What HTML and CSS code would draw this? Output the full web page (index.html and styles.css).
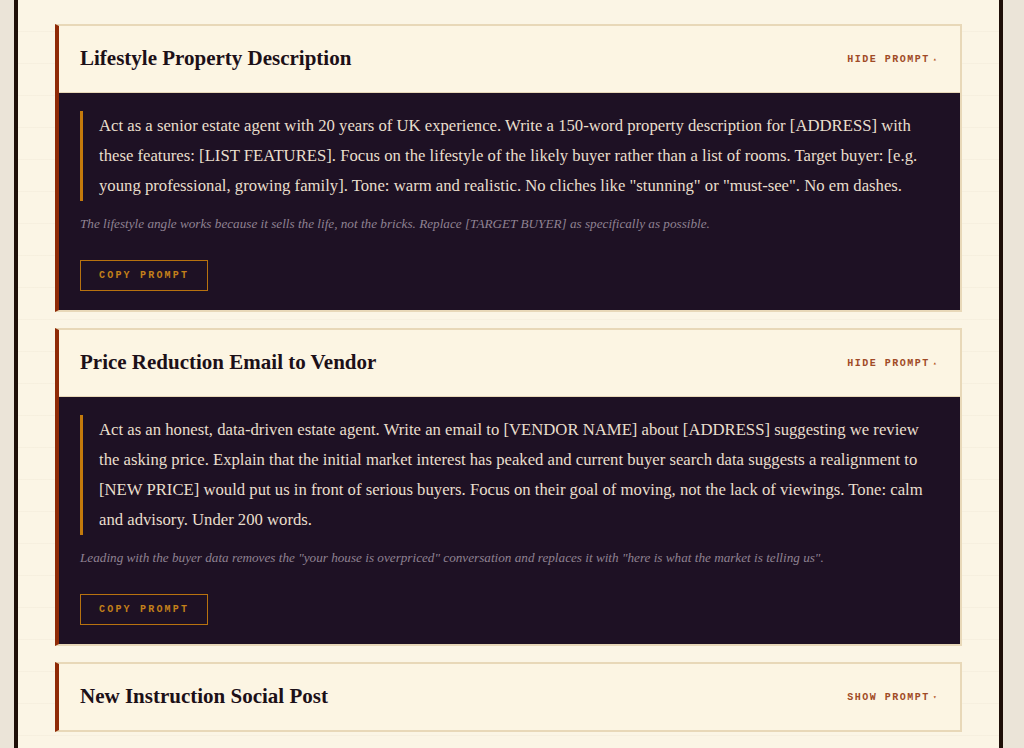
FILE: index.html
```html
<!DOCTYPE html>
<html lang="en">
<head>
    <meta charset="UTF-8">
    <meta name="viewport" content="width=device-width, initial-scale=1.0">
    <title>Estate Agent Prompt Library</title>
    <link rel="stylesheet" href="styles.css">
</head>
<body>
    <main class="sheet">
        <section class="prompt-card open">
            <header class="prompt-head">
                <h3>Lifestyle Property Description</h3>
                <button class="toggle" onclick="toggleCard(this)">Hide prompt<span class="arrow">&#9652;</span></button>
            </header>
            <div class="prompt-body">
                <blockquote class="prompt-text">Act as a senior estate agent with 20 years of UK experience. Write a 150-word property description for [ADDRESS] with these features: [LIST FEATURES]. Focus on the lifestyle of the likely buyer rather than a list of rooms. Target buyer: [e.g. young professional, growing family]. Tone: warm and realistic. No cliches like "stunning" or "must-see". No em dashes.</blockquote>
                <p class="prompt-note">The lifestyle angle works because it sells the life, not the bricks. Replace [TARGET BUYER] as specifically as possible.</p>
                <button class="copy-btn" onclick="copyPrompt(this)">Copy prompt</button>
            </div>
        </section>

        <section class="prompt-card open">
            <header class="prompt-head">
                <h3>Price Reduction Email to Vendor</h3>
                <button class="toggle" onclick="toggleCard(this)">Hide prompt<span class="arrow">&#9652;</span></button>
            </header>
            <div class="prompt-body">
                <blockquote class="prompt-text">Act as an honest, data-driven estate agent. Write an email to [VENDOR NAME] about [ADDRESS] suggesting we review the asking price. Explain that the initial market interest has peaked and current buyer search data suggests a realignment to [NEW PRICE] would put us in front of serious buyers. Focus on their goal of moving, not the lack of viewings. Tone: calm and advisory. Under 200 words.</blockquote>
                <p class="prompt-note">Leading with the buyer data removes the "your house is overpriced" conversation and replaces it with "here is what the market is telling us".</p>
                <button class="copy-btn" onclick="copyPrompt(this)">Copy prompt</button>
            </div>
        </section>

        <section class="prompt-card">
            <header class="prompt-head">
                <h3>New Instruction Social Post</h3>
                <button class="toggle" onclick="toggleCard(this)">Show prompt<span class="arrow">&#9662;</span></button>
            </header>
            <div class="prompt-body">
                <blockquote class="prompt-text">Write a short social media post announcing a new instruction at [ADDRESS]. Lead with one standout feature, mention [AREA], and end with a clear call to book a viewing. Under 80 words. No hashtags.</blockquote>
                <p class="prompt-note">Keep it to one photo-worthy detail. Posts that try to say everything get scrolled past.</p>
                <button class="copy-btn" onclick="copyPrompt(this)">Copy prompt</button>
            </div>
        </section>
    </main>

    <script>
        function toggleCard(btn) {
            const card = btn.closest('.prompt-card');
            const open = card.classList.toggle('open');
            btn.innerHTML = open
                ? 'Hide prompt<span class="arrow">&#9652;</span>'
                : 'Show prompt<span class="arrow">&#9662;</span>';
        }

        function copyPrompt(btn) {
            const text = btn.closest('.prompt-body').querySelector('.prompt-text').textContent;
            if (navigator.clipboard) navigator.clipboard.writeText(text);
            btn.textContent = 'Copied';
            setTimeout(() => { btn.textContent = 'Copy prompt'; }, 1500);
        }
    </script>
</body>
</html>
```

FILE: styles.css
```css
body { margin: 0; background: #ebe4d8; font-family: "Liberation Serif", serif; color: #1e1124; }
.sheet { margin: 0 21px 0 14px; min-height: 748px; box-sizing: border-box; padding: 24px 37px 16px; border-left: 4px solid #1e0f08; border-right: 4px solid #1e0f08; background-color: #fbf5e5; background-image: repeating-linear-gradient(to bottom, transparent 0, transparent 31px, rgba(120, 90, 50, 0.035) 31px, rgba(120, 90, 50, 0.035) 32px); display: flex; flex-direction: column; gap: 16px; }

.prompt-card { border: 2px solid #e8d8b8; border-left: 4px solid #8f2a06; background: #fcf5e3; }
.prompt-head { height: 66px; display: flex; align-items: center; justify-content: space-between; padding: 0 22px 0 21px; }
.prompt-head h3 { margin: 0 0 1px; font-size: 21px; font-weight: bold; color: #1c1018; }
.toggle { background: none; border: none; padding: 0; cursor: pointer; font-family: "Liberation Mono", monospace; font-size: 10px; font-weight: bold; letter-spacing: 1.5px; text-transform: uppercase; color: #a04a26; }
.toggle .arrow { font-size: 6px; margin-left: 3px; vertical-align: 1px; color: #b0521c; }

.prompt-body { display: none; background: #1e1124; padding: 18px 21px 19px; }
.prompt-card.open .prompt-head { border-bottom: 1px solid #e8d8b8; }
.prompt-card.open .prompt-body { display: block; }

.prompt-text { margin: 0 0 13px; padding-left: 16px; border-left: 3px solid #c47a0c; font-size: 16.7px; line-height: 30px; color: #e9dfcd; }
.prompt-note { margin: 0 0 26px; font-style: italic; font-size: 13.2px; line-height: 20px; color: #8f8292; }
.copy-btn { height: 31px; padding: 0 18px; background: transparent; border: 1px solid #b8720f; color: #c3801a; font-family: "Liberation Mono", monospace; font-size: 10px; font-weight: bold; letter-spacing: 2.2px; text-transform: uppercase; cursor: pointer; }
.copy-btn:hover { background: rgba(196, 122, 12, 0.12); }
```
